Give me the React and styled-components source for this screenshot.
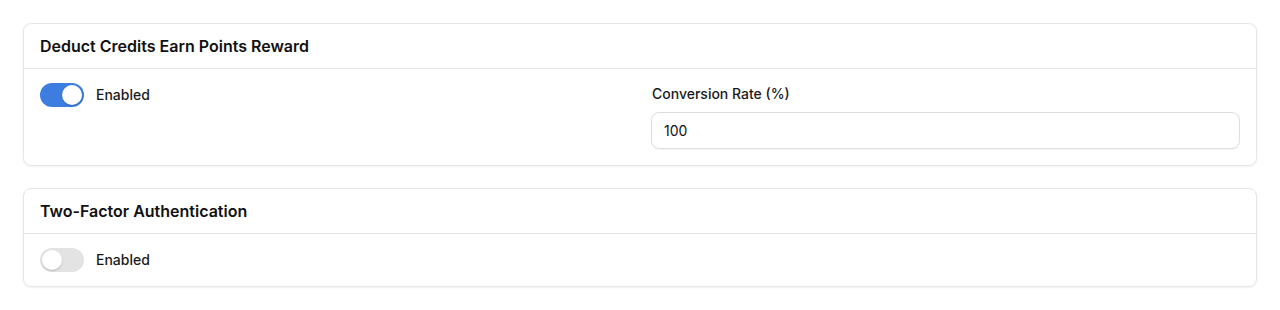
import styled, { createGlobalStyle } from 'styled-components'

const GlobalStyle = createGlobalStyle`
  html, body {
    margin: 0;
    background: #ffffff;
    font-family: Inter, "Liberation Sans", sans-serif;
    color: #171717;
  }
`;

const Page = styled.div`
  display: flex;
  flex-direction: column;
  gap: 22px;
  padding: 23px 23px 23px 23px;
`;

const Card = styled.section`
  border: 1px solid #e6e6e6;
  border-radius: 8px;
  background: #fff;
  box-shadow: 0 1px 2px rgba(0, 0, 0, 0.05);
`;

const CardHeader = styled.div`
  height: 44px;
  display: flex;
  align-items: center;
  padding: 0 16px;
  border-bottom: 1px solid #e6e6e6;
  font-size: 16px;
  font-weight: 600;
  color: #111;
`;

const CardBody = styled.div`
  display: grid;
  grid-template-columns: ${p => (p.cols === 2 ? '1fr 1fr' : '1fr')};
  column-gap: 22px;
  align-items: start;
  padding: 14px 16px ${p => (p.cols === 2 ? '16px' : '14px')};
`;

const ToggleRow = styled.label`
  display: flex;
  align-items: center;
  gap: 12px;
  font-size: 14px;
  font-weight: 500;
  line-height: 24px;
  color: #1a1a1a;
`;

const Track = styled.span`
  position: relative;
  width: 44px;
  height: 24px;
  border-radius: 12px;
  background: ${p => (p.on ? '#3d7ddf' : '#e3e3e3')};
  flex-shrink: 0;
`;

const Knob = styled.span`
  position: absolute;
  top: 2px;
  left: ${p => (p.on ? '22px' : '2px')};
  width: 20px;
  height: 20px;
  border-radius: 50%;
  background: #fff;
  box-shadow: 0 1px 2px rgba(0, 0, 0, 0.2);
`;

const Field = styled.div`
  display: flex;
  flex-direction: column;
  gap: 8px;
  padding-top: 1px;
`;

const Label = styled.div`
  font-size: 14px;
  font-weight: 500;
  line-height: 20px;
  padding-left: 1px;
  color: #1a1a1a;
`;

const Input = styled.input`
  box-sizing: border-box;
  height: 37px;
  width: 100%;
  border: 1px solid #dedede;
  border-radius: 8px;
  padding: 0 12px;
  font-family: inherit;
  font-size: 14px;
  color: #111;
  box-shadow: 0 1px 1px rgba(0, 0, 0, 0.04);
  outline: none;
`;

function Toggle({ on }) {
  return (
    <ToggleRow>
      <Track on={on}>
        <Knob on={on} />
      </Track>
      Enabled
    </ToggleRow>
  );
}

export default function App() {
  return (
    <>
      <GlobalStyle />
      <Page>
        <Card>
          <CardHeader>Deduct Credits Earn Points Reward</CardHeader>
          <CardBody cols={2}>
            <Toggle on />
            <Field>
              <Label>Conversion Rate (%)</Label>
              <Input defaultValue="100" />
            </Field>
          </CardBody>
        </Card>
        <Card>
          <CardHeader>Two-Factor Authentication</CardHeader>
          <CardBody>
            <Toggle />
          </CardBody>
        </Card>
      </Page>
    </>
  );
}
